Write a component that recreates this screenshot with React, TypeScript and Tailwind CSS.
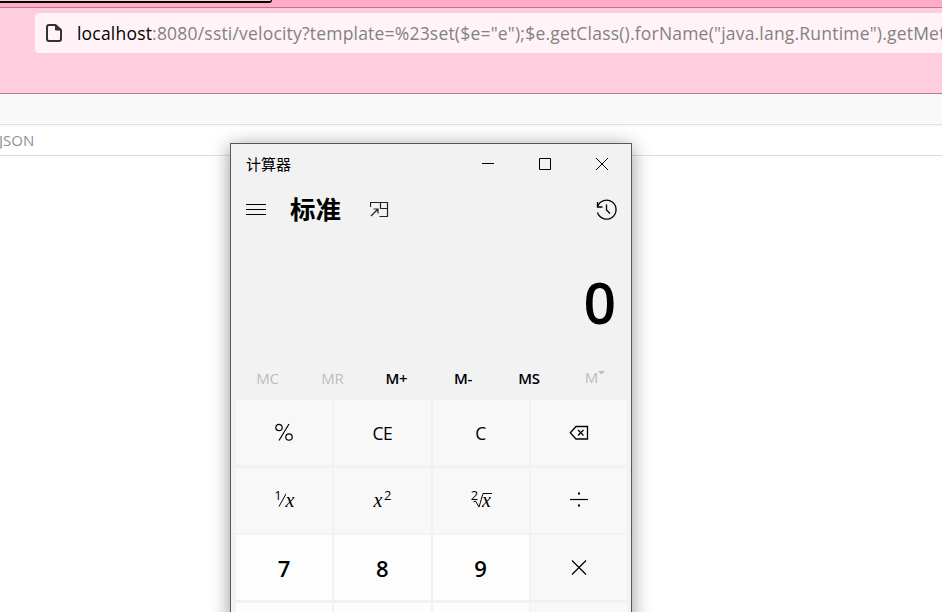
import type { ReactNode } from "react";

const cjk = "font-['Open_Sans','Noto_Sans_CJK_SC',sans-serif]";

function Key({ children, digit = false }: { children?: ReactNode; digit?: boolean }) {
  return (
    <button className={`flex items-center justify-center ${digit ? "bg-[#fdfdfd] pt-[2px] text-[22px] font-semibold" : "bg-[#f8f8f8] text-[17.500px] tracking-[-0.4px]"}`}>
      {children}
    </button>
  );
}

function Memory() {
  return (
    <div className="mt-[24px] flex h-8 pl-1 pr-[3px] text-[15px] font-semibold leading-8 tracking-[-0.2px] text-black">
      <span className="w-[65px] text-center font-normal text-[#bdbdbd]">MC</span>
      <span className="w-[65px] text-center font-normal text-[#bdbdbd]">MR</span>
      <span className="w-[63px] text-center">M+</span>
      <span className="w-[70px] text-center">M-</span>
      <span className="w-[62px] text-center">MS</span>
      <span className="flex flex-1 justify-center pl-[2px] font-normal leading-[30px] text-[#bdbdbd]">
        M
        <svg width="7" height="4" className="mt-[9px]" fill="#bdbdbd"><path d="M0 0h7L3.5 3.5z" /></svg>
      </span>
    </div>
  );
}

function Calculator() {
  return (
    <section className="absolute left-[230px] top-[143px] flex h-[560px] w-[402px] flex-col border border-[#58585a] bg-[#f2f2f2] text-black shadow-[0_3px_18px_rgba(0,0,0,0.42)]">
      <header className="flex h-10 items-center">
        <h1 className="ml-[15px] flex-1 text-[15px] leading-5">计算器</h1>
        <svg width="171" height="40" fill="none" stroke="black">
          <path d="M22 19.5h12M79.5 14.5h11v11h-11zM136 14l12 12M148 14L136 26" />
        </svg>
      </header>
      <div className="flex h-[52px] items-center">
        <svg className="ml-[15px]" width="20" height="14" stroke="black"><path d="M0 1.500h20M0 6.500h20M0 11.500h20" /></svg>
        <h2 className="-mt-[2px] ml-6 w-[52px] text-[25.500px] font-bold leading-9">标准</h2>
        <svg className="ml-[28px]" width="20" height="18" fill="none" stroke="#222" strokeWidth="1.200">
          <path d="M.5 6V1.500h17v14H9.500M10.500 1.500v6h7M1 15l7-7M3.500 8H8v4.500" />
        </svg>
        <svg className="ml-[206px]" width="22" height="22" fill="none" stroke="black" strokeWidth="1.300">
          <path d="M1.600 7.500A9.500 9.500 0 1 1 1.500 13.500M1.500 3v5h5M10.500 5.500V11l3.500 3.500" />
        </svg>
      </div>
      <div className="flex h-[102px] items-center justify-end pr-[15px] pt-[31px] text-[57px] font-semibold leading-none">
        <span className="block">0</span>
      </div>
      <Memory />
      <div className="ml-[5px] mt-[6px] grid w-[391px] auto-rows-[65px] grid-cols-4 gap-x-[2px] gap-y-[2.500px]">
        <Key>
          <svg width="18" height="20" className="-mt-px" fill="none" stroke="black" strokeWidth="1.200"><circle cx="4" cy="5.500" r="3.200" /><circle cx="14" cy="15" r="3.200" /><path d="M14 2L4 18.500" /></svg>
        </Key>
        <Key><span className="pt-px">CE</span></Key>
        <Key><span className="pt-px">C</span></Key>
        <Key>
          <svg width="20" height="16" fill="none" stroke="black" strokeWidth="1.300"><path d="M7 1.500h11.500v12.500H7L1.300 7.800zM9 5l5.500 5.500M14.500 5L9 10.500" /></svg>
        </Key>
        <Key>
          <span className="flex items-center">
            <span className="-mt-2 text-[13px]">1</span>
            <svg width="8" height="18" className="-ml-[3px]" stroke="black"><path d="M8.500 2L1 15.500" /></svg>
            <i className="-ml-px font-['Liberation_Serif',serif] text-[20px]">x</i>
          </span>
        </Key>
        <Key>
          <span className="flex items-center">
            <i className="font-['Liberation_Serif',serif] text-[20px]">x</i>
            <span className="-mt-2 ml-[2px] text-[13px]">2</span>
          </span>
        </Key>
        <Key>
          <span className="flex items-center">
            <span className="-mt-2 text-[13px]">2</span>
            <svg width="19" height="18" className="-ml-[5px] -mr-[10px]" fill="none" stroke="black"><path d="M.5 11l2-1 3.500 6 4-13.500H19" /></svg>
            <i className="font-['Liberation_Serif',serif] text-[20px]">x</i>
          </span>
        </Key>
        <Key>
          <svg width="18" height="18" className="-mt-[3px]" stroke="black" strokeWidth="1.200"><path d="M0 9.500h18" /><path d="M8 3.500h2M8 15.500h2" strokeWidth="2" /></svg>
        </Key>
        <Key digit>7</Key>
        <Key digit>8</Key>
        <Key digit>9</Key>
        <Key>
          <svg width="16" height="16" stroke="black" strokeWidth="1.200"><path d="M1 .5l14 14M15 .5l-14 14" /></svg>
        </Key>
        <Key digit />
        <Key digit />
        <Key digit />
        <Key />
      </div>
    </section>
  );
}

export default function App() {
  return (
    <div className={`relative h-[612px] w-[942px] overflow-hidden bg-white ${cjk}`}>
      <div className="h-2 border-b border-[#b9788f] bg-[#ffacc8]">
        <div className="h-[3px] w-[272px] rounded-br-[3px] border-b-2 border-r border-black bg-[#ffcddd]" />
      </div>
      <div className="h-[86px] border-b border-[#b9788f] bg-[#ffcddd] pt-[5px]">
        <div className="ml-[35px] flex h-10 items-center overflow-hidden rounded-l bg-[#fff3f7] pl-[11px]">
          <svg width="16" height="18" className="shrink-0" fill="none" stroke="#333" strokeWidth="2" strokeLinejoin="round">
            <path d="M3 1h6.500L15 6v9q0 2-2 2H3q-2 0-2-2V3q0-2 2-2z" /><path d="M9.500 1v5H15z" fill="#333" strokeWidth="1" />
          </svg>
          <div className="ml-[15px] flex whitespace-nowrap text-[17.500px] leading-6 tracking-[0.2px] text-[#828282]">
            <span className="text-black">localhost</span>
            <span>{':8080/ssti/velocity?template=%23set($e="e");$e.getClass().forName("java.lang.Runtime").getMet'}</span>
          </div>
        </div>
      </div>
      <div className="h-[31px] border-b border-[#e0e0e1] bg-[#f9f9fa]" />
      <div className="h-[31px] overflow-hidden border-b border-[#dcdcdd] border-t-2 border-t-[#f9f9fa] bg-white">
        <span className="-ml-px block text-[15px] leading-[27px] text-[#909095]">JSON</span>
      </div>
      <Calculator />
    </div>
  );
}
